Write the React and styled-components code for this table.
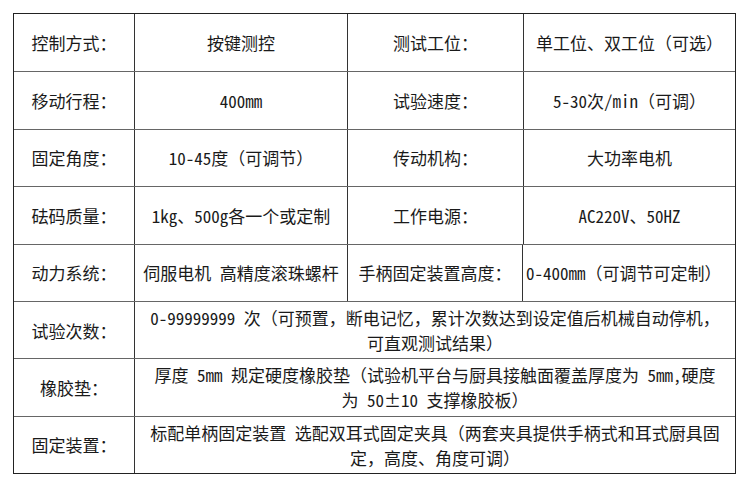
import React from "react";
import styled, { createGlobalStyle } from "styled-components";

const Global = createGlobalStyle`
  html, body { margin: 0; padding: 0; background: #fff; }
  body {
    font-family: "Noto Sans CJK SC", "Noto Sans", sans-serif;
    color: #1a1a1a;
  }
`;

const Page = styled.div`
  padding: 13px 0 0 13px;
`;

const Table = styled.div`
  box-sizing: border-box;
  width: 723px;
  height: 461px;
  border: 1px solid #222;
  display: grid;
  grid-template-rows: repeat(8, 1fr);
`;

const Row = styled.div`
  display: grid;
  grid-template-columns: ${(p) => p.$cols};
  min-height: 0;
  & + & {
    border-top: 1px solid #666;
  }
`;

const Cell = styled.div`
  box-sizing: border-box;
  display: flex;
  flex-direction: column;
  justify-content: center;
  align-items: ${(p) => (p.$left ? "flex-start" : "center")};
  padding: ${(p) => (p.$left ? "0 0 0 3px" : "0")};
  font-size: 17px;
  line-height: 25px;
  white-space: nowrap;
  text-align: center;
  overflow: hidden;
  & + & {
    border-left: 1px solid #333;
  }
`;

const Line = styled.span`
  display: block;
`;

const Half = styled.span`
  font-feature-settings: "hwid" 1;
`;

function T({ children }) {
  const parts = String(children).split(/([\x20-\x7e]+)/);
  return (
    <Line>
      {parts.map((p, i) =>
        i % 2 === 1 ? <Half key={i}>{p}</Half> : <React.Fragment key={i}>{p}</React.Fragment>
      )}
    </Line>
  );
}

const COLS4 = "120px 213px 176px 1fr";
const COLS4B = "120px 213px 175px 1fr";
const COLS2 = "120px 1fr";

const quad = [
  ["控制方式：", "按键测控", "测试工位：", "单工位、双工位（可选）"],
  ["移动行程：", "400mm", "试验速度：", "5-30次/min（可调）"],
  ["固定角度：", "10-45度（可调节）", "传动机构：", "大功率电机"],
  ["砝码质量：", "1kg、500g各一个或定制", "工作电源：", "AC220V、50HZ"],
];

const wide = [
  [
    "试验次数：",
    [
      "0-99999999 次（可预置，断电记忆，累计次数达到设定值后机械自动停机，",
      "可直观测试结果）",
    ],
  ],
  [
    "橡胶垫：",
    [
      "厚度 5mm 规定硬度橡胶垫（试验机平台与厨具接触面覆盖厚度为 5mm,硬度",
      "为 50±10 支撑橡胶板）",
    ],
  ],
  [
    "固定装置：",
    [
      "标配单柄固定装置 选配双耳式固定夹具（两套夹具提供手柄式和耳式厨具固",
      "定，高度、角度可调）",
    ],
  ],
];

export default function App() {
  return (
    <>
      <Global />
      <Page>
        <Table>
          {quad.map((r) => (
            <Row key={r[0]} $cols={COLS4}>
              {r.map((c) => (
                <Cell key={c}>
                  <T>{c}</T>
                </Cell>
              ))}
            </Row>
          ))}
          <Row $cols={COLS4B}>
            <Cell>
              <T>动力系统：</T>
            </Cell>
            <Cell>
              <T>伺服电机 高精度滚珠螺杆</T>
            </Cell>
            <Cell>
              <T>手柄固定装置高度：</T>
            </Cell>
            <Cell $left>
              <T>0-400mm（可调节可定制）</T>
            </Cell>
          </Row>
          {wide.map(([label, lines]) => (
            <Row key={label} $cols={COLS2}>
              <Cell>
                <T>{label}</T>
              </Cell>
              <Cell>
                {lines.map((l) => (
                  <T key={l}>{l}</T>
                ))}
              </Cell>
            </Row>
          ))}
        </Table>
      </Page>
    </>
  );
}
